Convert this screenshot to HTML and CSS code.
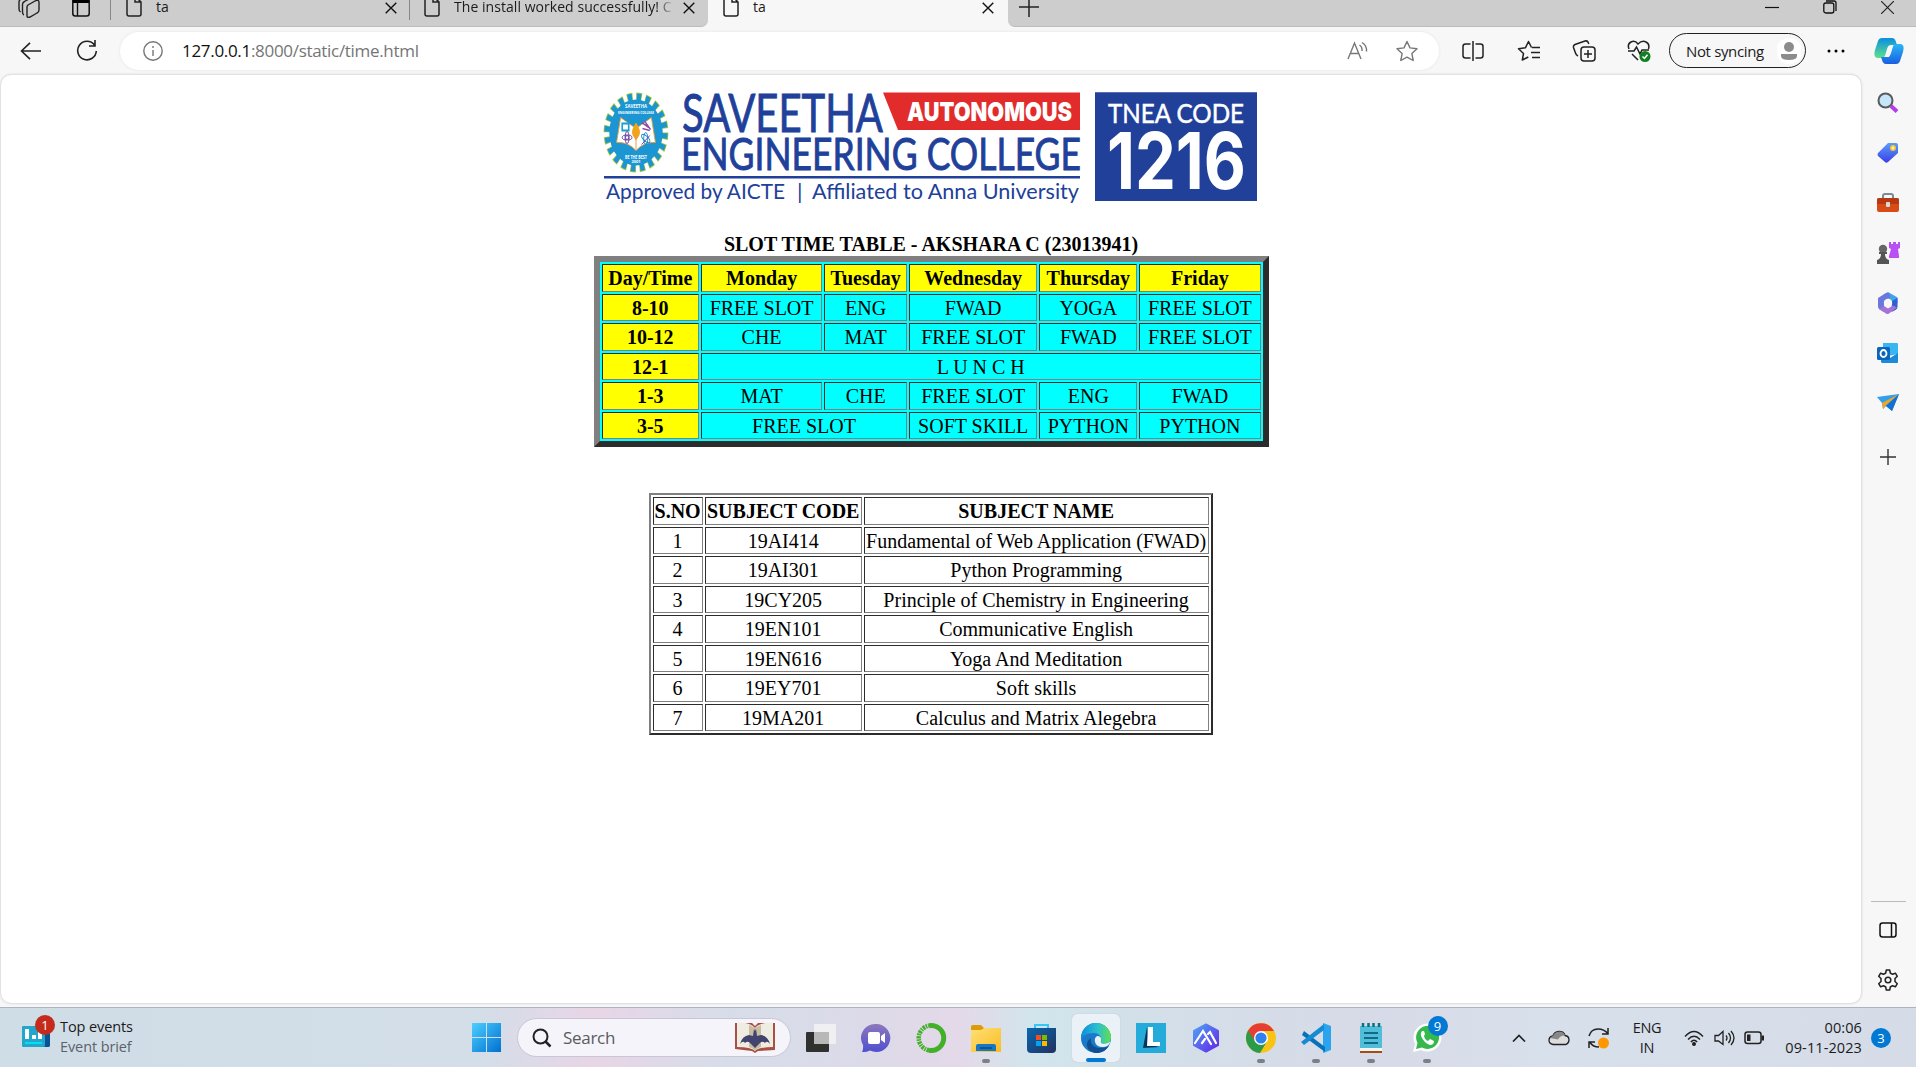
FILE: index.html
```html
<!DOCTYPE html>
<html lang="en">
<head>
<meta charset="utf-8">
<title>ta</title>
<link rel="stylesheet" href="styles.css">
</head>
<body>
<svg width="0" height="0" class="defs">
  <defs>
    <symbol id="doc" viewBox="0 0 20 22"><path d="M3 1h8l6 6v12a2 2 0 0 1-2 2H5a2 2 0 0 1-2-2zM11 1v6h6" fill="none" stroke="#222" stroke-width="1.5"/></symbol>
    <symbol id="x" viewBox="0 0 12 12"><path d="M.7.7l10.6 10.6M11.3.7L.7 11.3" stroke="#111" stroke-width="1.4"/></symbol>
    <linearGradient id="gBlue" x2="1" y2="1"><stop offset="0" stop-color="#4cd0ff"/><stop offset="1" stop-color="#0070d0"/></linearGradient>
    <linearGradient id="gTeal" x2="0" y2="1"><stop offset="0" stop-color="#0a8fe0"/><stop offset="1" stop-color="#5fe08c"/></linearGradient>
    <linearGradient id="gCo" x2="0" y2="1"><stop offset="0" stop-color="#29b6f6"/><stop offset="1" stop-color="#1a5fe0"/></linearGradient>
    <linearGradient id="gPur" x2="1" y2="1"><stop offset="0" stop-color="#4fa3f5"/><stop offset="1" stop-color="#6425e8"/></linearGradient>
    <linearGradient id="gTag" x2="0" y2="1"><stop offset="0" stop-color="#5c9dfa"/><stop offset="1" stop-color="#3a3fe6"/></linearGradient>
    <linearGradient id="gChat" x2="0" y2="1"><stop offset="0" stop-color="#8d78bd"/><stop offset="1" stop-color="#4f50cf"/></linearGradient>
    <linearGradient id="gFold" x2="1" y2="1"><stop offset="0" stop-color="#ffdf77"/><stop offset="1" stop-color="#f9bd22"/></linearGradient>
    <linearGradient id="gEdge" x2="1"><stop offset="0" stop-color="#0d8ddb"/><stop offset=".55" stop-color="#2bc0d0"/><stop offset="1" stop-color="#62df4c"/></linearGradient>
    <linearGradient id="gStore" x2="1" y2="1"><stop offset="0" stop-color="#0868b2"/><stop offset="1" stop-color="#24305c"/></linearGradient>
  </defs>
</svg>

<header class="tabstrip">
  <span class="cell workspaces"><svg width="22" height="24" viewBox="0 0 22 24" fill="none" stroke="#222" stroke-width="1.4"><path d="M10 10l8-4.500q3-1 3 2V15q0 2-2 3l-7 4q-3 1-3-1v-9q0-1 1-2zM6 20q-1.500-.5-1.500-3V9.500q0-2 2-3l8-4.500M2.500 17q-1.500-1-1.500-3V7q0-2 2-3l6-3.500"/></svg></span>
  <span class="cell tabmenu"><svg width="18" height="20" viewBox="0 0 18 20"><rect x=".8" y="1" width="16.4" height="18" rx="2.5" fill="none" stroke="#111" stroke-width="1.5"/><path d="M1 1h16v5H1z"/><path d="M5.5 6v13" stroke="#111" stroke-width="1.4"/></svg></span>
  <div class="tab first"><svg class="doc"><use href="#doc"/></svg><span class="title">ta</span><svg class="x"><use href="#x"/></svg></div>
  <div class="tab second"><svg class="doc"><use href="#doc"/></svg><span class="title faded">The install worked successfully! C</span><svg class="x"><use href="#x"/></svg></div>
  <div class="tab active"><svg class="doc"><use href="#doc"/></svg><span class="title">ta</span><svg class="x"><use href="#x"/></svg></div>
  <div class="rest">
    <span class="cell newtab"><svg width="20" height="20"><path d="M0 10h20M10 0v20" stroke="#222" stroke-width="1.5"/></svg></span>
    <div class="winctl">
      <span class="cell"><svg width="14" height="14"><path d="M0 7.500h14" stroke="#111" stroke-width="1.2"/></svg></span>
      <span class="cell"><svg width="14" height="14" fill="none" stroke="#111" stroke-width="1.3"><rect x=".8" y="3" width="10" height="10" rx="2"/><path d="M3 1h8q2 0 2 2v8"/></svg></span>
      <span class="cell"><svg width="13" height="13" viewBox="0 0 12 12"><path d="M0 0l12 12M12 0L0 12" stroke="#222" stroke-width="1.1"/></svg></span>
    </div>
  </div>
</header>

<nav class="toolbar">
  <span class="cell back"><svg width="22" height="18"><path d="M21 9H1.5M10 .8L1.5 9l8.500 8.200" fill="none" stroke="#222" stroke-width="1.6"/></svg></span>
  <span class="cell reload"><svg width="22" height="22" fill="none" stroke="#222" stroke-width="1.6"><path d="M18.500 5A9.300 9.300 0 1 0 20.300 11M19 0v6h-6"/></svg></span>
  <div class="address">
    <svg class="info" width="20" height="20" fill="none" stroke="#777" stroke-width="1.4"><circle cx="10" cy="10" r="9.200"/><path d="M10 9v6M10 5v2"/></svg>
    <span class="url"><b>127.0.0.1</b>:8000/static/time.html</span>
    <svg class="read" width="22" height="20" fill="none" stroke="#777" stroke-width="1.4"><path d="M1 18L7.500 2 14 18M3.500 12.500h8M12.500 4q3 2 2.500 6M15 1.500q5 3 4.500 9"/></svg>
    <svg class="fav" width="24" height="22" viewBox="0 0 24 22" fill="none" stroke="#777" stroke-width="1.4" stroke-linejoin="round"><path d="M12 1.500l3 6.400 7 .9-5.100 4.800 1.300 6.900-6.200-3.400-6.200 3.400 1.300-6.900L2 8.800l7-.9z"/></svg>
  </div>
  <div class="tools">
    <span class="cell"><svg width="22" height="20" fill="none" stroke="#222" stroke-width="1.5"><path d="M8.500 3H3.500Q1 3 1 5.500v9Q1 17 3.500 17h5M13.500 3h5Q21 3 21 5.500v9q0 2.500-2.500 2.500h-5M11 0v20"/></svg></span>
    <span class="cell"><svg width="24" height="22" viewBox="0 0 24 22" fill="none" stroke="#222" stroke-width="1.500" stroke-linejoin="round"><path d="M14.500 7.500L11.500 1.500l-3 6.200-7 1L6.500 13.500 5.300 20l6-3M15 7.500h8M14 12.500h9M15 17.500h8"/></svg></span>
    <span class="cell collect"><svg width="24" height="22" fill="none" stroke="#222" stroke-width="1.500"><rect x="9" y="7" width="14" height="14" rx="3"/><path d="M16 10v8M12 14h8M6 16q-2-1-2.500-3L1.500 7.500q-.5-2 1.500-3L13 1q2-.5 3 1l.8 2"/></svg></span>
    <span class="cell last"><svg width="24" height="22" fill="none" stroke="#222" stroke-width="1.500"><path d="M2 9Q0 4 4 2q4-2 7 2 4-4 8-2 4 2 2.500 7M1 11h6l2.500-4 3.500 7 2-4h7M5 14l6 6"/><circle cx="18" cy="16.500" r="5.500" fill="#128020" stroke="none"/><path d="M15.500 16.500l2 2 3-3.700" stroke="#fff"/></svg></span>
  </div>
  <div class="profile"><span>Not syncing</span><svg width="24" height="28"><circle cx="12" cy="14" r="13" fill="#fff"/><circle cx="12" cy="10" r="5" fill="#8c8c8c"/><path d="M4 17h16v2q0 4-8 4t-8-4z" fill="#8c8c8c"/></svg></div>
  <span class="cell more"><svg width="18" height="4"><circle cx="2" cy="2" r="1.500"/><circle cx="9" cy="2" r="1.500"/><circle cx="16" cy="2" r="1.500"/></svg></span>
  <span class="cell copilot"><svg width="30" height="28" viewBox="0 0 30 28"><path d="M8 1h10q3 0 4 4l1 3h-6q-3 0-4 4l-2 7q-1 2-4 2H4q-5 0-3-8L4 4q1-3 4-3z" fill="url(#gTeal)"/><path d="M22 27H12q-3 0-4-4l-1-3h6q3 0 4-4l2-7q1-2 4-2h3q5 0 3 8l-3 9q-1 3-4 3z" fill="url(#gCo)"/><path d="M15 9h4l-4 11h-4z" fill="#f7f7f7"/></svg></span>
</nav>

<div class="middle">
  <main class="page">
    <svg class="banner" width="656" height="116" viewBox="604 90 656 116" role="img">
      <g transform="translate(637 132.500) scale(.81 1)">
        <circle r="35.500" fill="none" stroke="#a8c83c" stroke-width="9" stroke-dasharray="6.800 4.353"/>
        <circle r="35" fill="none" stroke="#1b96d3" stroke-width="8" stroke-dasharray="5.200 5.796" stroke-dashoffset="-.7"/>
        <circle r="33" fill="#1b96d3"/>
        <path d="M-19-15L0-4 19-15 24 10Q10 9 0 18-10 9-24 10z" fill="#fff" stroke="#e59a35"/>
        <path d="M-17-9h8v7h-8z" fill="none" stroke="#16a0cf" stroke-width="2"/><path d="M7-10l9 5-5-6 7 8M8-4l9 2" stroke="#8b4da8" stroke-width="1.500"/>
        <g fill="none" stroke="#60359b"><ellipse cx="-11" cy="5" rx="6" ry="2.500"/><ellipse cx="-11" cy="5" rx="2.500" ry="6"/><circle cx="-11" cy="5" r="2"/></g>
        <g fill="none" stroke="#1488cb"><ellipse cx="12" cy="6" rx="6" ry="2.500" transform="rotate(35 12 6)"/><ellipse cx="12" cy="6" rx="2.500" ry="6"/><path d="M7 12l10-9" stroke="#60359b"/></g>
        <path d="M0-10Q7-2 4 3L0 8-4 3Q-7-2 0-10z" fill="#f2a21b"/><path d="M0 3v14" stroke="#e59a35"/>
      </g>
      <g fill="#fff" font-family="Open Sans, sans-serif" font-weight="700" text-anchor="middle">
        <text x="637" y="108" font-size="5" textLength="22" lengthAdjust="spacingAndGlyphs">SAVEETHA</text>
        <text x="637" y="114" font-size="4" textLength="36" lengthAdjust="spacingAndGlyphs">ENGINEERING COLLEGE</text>
        <text x="637" y="158.500" font-size="4.500" textLength="22" lengthAdjust="spacingAndGlyphs">BE THE BEST</text>
        <text x="637" y="163" font-size="4">2001</text>
      </g>
      <g fill="#20409a" stroke="#20409a" font-family="Lato, sans-serif">
        <text x="683" y="131.500" font-size="53" stroke-width=".9" textLength="201" lengthAdjust="spacingAndGlyphs">SAVEETHA</text>
        <text x="682" y="169.500" font-size="44" stroke-width=".9" textLength="400" lengthAdjust="spacingAndGlyphs">ENGINEERING COLLEGE</text>
      </g>
      <path d="M884 92.500h197v37.500H899z" fill="#e22b2b"/>
      <text x="908" y="121" font-family="Inter, sans-serif" font-weight="900" font-size="26" fill="#fff" textLength="165" lengthAdjust="spacingAndGlyphs">AUTONOMOUS</text>
      <path d="M605 177.300h476" stroke="#20409a" stroke-width="2.600"/>
      <g fill="#20409a" font-family="Lato, sans-serif" font-size="22">
        <text x="607" y="199" textLength="179" lengthAdjust="spacingAndGlyphs">Approved by AICTE</text>
        <text x="798" y="199">|</text>
        <text x="813" y="199" textLength="267" lengthAdjust="spacingAndGlyphs">Affiliated to Anna University</text>
      </g>
      <path d="M1096 92.300h162V201h-162z" fill="#20409a"/>
      <text x="1109" y="122.500" font-family="Lato, sans-serif" font-size="26.500" fill="#fff" stroke="#fff" stroke-width=".5" textLength="136" lengthAdjust="spacingAndGlyphs">TNEA CODE</text>
      <text x="1108" y="189" font-family="Inter, sans-serif" font-weight="700" font-size="78" fill="#fff" textLength="139" lengthAdjust="spacingAndGlyphs">1216</text>
    </svg>

    <table class="slots">
      <caption>SLOT TIME TABLE - AKSHARA C (23013941)</caption>
      <colgroup><col class="w1"><col class="w2"><col class="w3"><col class="w4"><col class="w5"><col class="w6"></colgroup>
      <tr><th>Day/Time</th><th>Monday</th><th>Tuesday</th><th>Wednesday</th><th>Thursday</th><th>Friday</th></tr>
      <tr><th>8-10</th><td>FREE SLOT</td><td>ENG</td><td>FWAD</td><td>YOGA</td><td>FREE SLOT</td></tr>
      <tr><th>10-12</th><td>CHE</td><td>MAT</td><td>FREE SLOT</td><td>FWAD</td><td>FREE SLOT</td></tr>
      <tr><th>12-1</th><td colspan="5">L U N C H</td></tr>
      <tr><th>1-3</th><td>MAT</td><td>CHE</td><td>FREE SLOT</td><td>ENG</td><td>FWAD</td></tr>
      <tr><th>3-5</th><td colspan="2">FREE SLOT</td><td>SOFT SKILL</td><td>PYTHON</td><td>PYTHON</td></tr>
    </table>

    <table class="subjects">
      <colgroup><col class="s1"><col class="s2"><col class="s3"></colgroup>
      <tr><th>S.NO</th><th>SUBJECT CODE</th><th>SUBJECT NAME</th></tr>
      <tr><td>1</td><td>19AI414</td><td>Fundamental of Web Application (FWAD)</td></tr>
      <tr><td>2</td><td>19AI301</td><td>Python Programming</td></tr>
      <tr><td>3</td><td>19CY205</td><td>Principle of Chemistry in Engineering</td></tr>
      <tr><td>4</td><td>19EN101</td><td>Communicative English</td></tr>
      <tr><td>5</td><td>19EN616</td><td>Yoga And Meditation</td></tr>
      <tr><td>6</td><td>19EY701</td><td>Soft skills</td></tr>
      <tr><td>7</td><td>19MA201</td><td>Calculus and Matrix Alegebra</td></tr>
    </table>
  </main>

  <aside class="sidebar">
    <div class="apps">
      <span class="cell"><svg width="22" height="22"><path d="M14 14l6 5.500" stroke="#b43cf0" stroke-width="4"/><circle cx="8.500" cy="8.500" r="7" fill="#c5e6fa" stroke="#5a5a5a" stroke-width="2"/></svg></span>
      <span class="cell"><svg width="22" height="22"><path d="M11 1h8q2 0 2 2v8L11 20q-2 1.500-3 0l-7-6q-1-1.500 0-3z" fill="url(#gTag)"/><circle cx="16" cy="6" r="2.200" fill="#fff3a0" stroke="#f7c82d" stroke-width="1.500"/></svg></span>
      <span class="cell"><svg width="24" height="20"><path d="M7 5V3q0-2 2-2h6q2 0 2 2v2" fill="none" stroke="#7d8990" stroke-width="2"/><rect x="1" y="5" width="22" height="14" rx="2" fill="#d84a16"/><path d="M1 7q0-2 2-2h18q2 0 2 2v4H1z" fill="#b63812"/><rect x="10" y="9" width="4" height="5" rx="1" fill="#d5dcdf"/></svg></span>
      <span class="cell"><svg width="24" height="24"><path d="M13 1h2v2h2V1h3v2h2V1h2v6l-2 1 1 7v2H13v-2l2-7-2-1z" fill="#b950f4"/><circle cx="7" cy="8" r="4.200" fill="#666"/><path d="M3 11h8v2H9q0 5 4 6v4H1v-4q4-1 4-6H3z" fill="#555"/></svg></span>
      <span class="cell"><svg width="22" height="24"><path d="M11 1l9.500 5.500v6L15 10l-4-3-4 2-1-5z" fill="#3fa4ea"/><path d="M1 7l8-5q3-1 4 2v3L7 10v11l-5-3q-1-1-1-3z" fill="#6a78de"/><path d="M20.500 7v9q0 2-2 3l-4 2 .5-11z" fill="#2f62cf"/><path d="M2 18l5-3 4 2.500 5-3 4 2-8 6q-1.500 1-3 0z" fill="#a472d8"/><circle cx="11" cy="12" r="4.200" fill="#f7f7f7"/></svg></span>
      <span class="cell"><svg width="22" height="22"><path d="M6 1h14q1 0 1 1v10l-15 3z" fill="#38b6f2"/><path d="M4 20V12l9 4 8-5v9q0 1-1 1H5z" fill="#198bd8"/><rect x="0" y="5" width="13" height="13" rx="1.500" fill="#0a65bd"/><ellipse cx="6.500" cy="11.500" rx="3" ry="3.500" fill="none" stroke="#fff" stroke-width="1.800"/></svg></span>
      <span class="cell"><svg width="22" height="18"><path d="M0 3L22 0 15 17 9 12 6 15 5 9z" fill="#359ded"/><path d="M22 0L5 9l1 6 3-4z" fill="#f3a51c"/><path d="M22 0L9 12l6 5z" fill="#1470ce"/></svg></span>
      <span class="cell plus"><svg width="16" height="16"><path d="M0 8h16M8 0v16" stroke="#333" stroke-width="1.400"/></svg></span>
    </div>
    <div class="bottom">
      <span class="cell"><svg width="18" height="16" fill="none" stroke="#111" stroke-width="1.500"><rect x="1" y="1" width="16" height="14" rx="2.500"/><path d="M12.500 1v14"/></svg></span>
      <span class="cell"><svg width="22" height="22" viewBox="0 0 22 22" fill="none" stroke="#222" stroke-width="1.500" stroke-linejoin="round"><path d="M9.300 1h3.400l.6 3 2.200 1.300 2.900-1.100 1.900 3.100L18 9.500v3l2.300 2.200-1.900 3.100-2.900-1.100-2.200 1.300-.6 3H9.300l-.6-3-2.200-1.300-2.900 1.100-1.900-3.100L4 12.500v-3L1.700 7.300l1.900-3.100 2.900 1.100L8.700 4z"/><circle cx="11" cy="11" r="2.800"/></svg></span>
    </div>
  </aside>
</div>

<footer class="taskbar">
  <div class="widgets">
    <div class="wicon"><svg width="28" height="22"><rect width="28" height="21" rx="2" fill="#087bc7"/><rect width="23" height="21" rx="2" fill="#22a6c9"/><path d="M23 4h5v15q0 2-3 2h-2z" fill="#0a5298"/><path d="M3 3h4v10H3zM10 9h4v4h-4zM16 6h4v7h-4z" fill="#fff"/><path d="M3 17h17" stroke="#08dcf7" stroke-width="2"/></svg><span class="badge red">1</span></div>
    <div class="wtext"><span>Top events</span><span class="sub">Event brief</span></div>
  </div>
  <div class="center">
    <span class="cell start"><svg width="29" height="29"><path d="M0 0h14v14H0zM15 0h14v14H15zM0 15h14v14H0zM15 15h14v14H15z" fill="url(#gBlue)"/></svg></span>
    <div class="search"><svg width="20" height="20" fill="none" stroke="#222" stroke-width="2"><circle cx="8.500" cy="8.500" r="7"/><path d="M13.500 13.500l5 5" stroke-width="2.500"/></svg><span>Search</span>
      <svg class="book" width="40" height="32"><path d="M0 1h17l3 3 3-3h17v27l-17 1-3 2-3-2-17-2z" fill="#a94f43"/><path d="M2 1q13-1 18 5Q25 0 38 1v24q-14 0-18 4Q16 25 2 25z" fill="#efede2"/><path d="M20 6v23q-2-3-6-4V3zM20 6v23q2-3 6-4V3z" fill="#c8bca3"/><path d="M5 22q2-8 9-9l4 1 1-7 1 2 1-2 1 7 4-1q7 1 9 9-3-4-5-1-3-3-6 1l-4 4-4-4q-3-4-6-1-2-3-5 1z" fill="#43436f"/></svg></div>
    <span class="app"><svg width="30" height="28"><rect y="8" width="23" height="20" rx="1" fill="#30302f"/><rect x="8" width="22" height="20" rx="1" fill="#f5f5f5" fill-opacity=".8"/><path d="M8 8h15v12H8z" fill="#b8b8b8"/></svg></span>
    <span class="app"><svg width="30" height="30"><path d="M15 1a14 14 0 1 1-6 26.500Q5 29.500 1 29q1.500-3 1-7A14 14 0 0 1 15 1z" fill="url(#gChat)"/><rect x="7" y="9" width="12" height="12" rx="2" fill="#fff"/><path d="M20 13l4-3v10l-4-3z" fill="#fff"/></svg></span>
    <span class="app"><svg width="32" height="32" fill="none" stroke="#43b02a"><path d="M14 28.300a12.500 12.500 0 1 0 0-24.600" stroke-width="5"/><path d="M14 28.300a12.500 12.500 0 0 1 0-24.600" stroke-width="4.500" stroke-dasharray="2.500 .8 1.500 .8"/></svg></span>
    <span class="app run"><svg width="30" height="28"><path d="M0 3q0-2 2-2h8l3 3h17v8H0z" fill="#dc9b08"/><path d="M0 6h10l3-2h17v24H0z" fill="url(#gFold)"/><path d="M5 27v-5q0-2 2-2h16q2 0 2 2v5z" fill="#1678c5"/><path d="M9 24h12" stroke="#084b8b" stroke-width="1.500"/></svg></span>
    <span class="app"><svg width="30" height="30"><path d="M9 6V2h13v4" fill="none" stroke="#38c6f4" stroke-width="2"/><path d="M1 5h29v21q0 4-4 4H5q-4 0-4-4z" fill="url(#gStore)"/><path d="M10 12h5v5h-5z" fill="#f25022"/><path d="M16 12h5v5h-5z" fill="#7fba00"/><path d="M10 18h5v5h-5z" fill="#00a4ef"/><path d="M16 18h5v5h-5z" fill="#ffb900"/></svg></span>
    <span class="app current"><svg width="30" height="30"><circle cx="15" cy="15" r="15" fill="#1a79c9"/><path d="M0 16C0 6 7 0 15 0c9 0 15 7 15 14 0 6-6 9-11 7 3-4 1-11-6-11C6 10 1 13 0 16z" fill="url(#gEdge)"/><path d="M10 15c-2 8 7 13 18 8-5 8-14 9-20 4-3-4-3-9 2-12z" fill="#104f91"/><path d="M29.500 18Q28 24 22 24q-7 0-8-5-1-4 2-6 5 0 4 5-1 2 2 3 5 0 7.500-3z" fill="#eaf1f7"/></svg></span>
    <span class="app"><svg width="30" height="30"><path d="M0 0h30v30H0z" fill="#24abd9"/><path d="M11 4L7 25l16-1-10-3z" fill="#07345d"/><path d="M12 4h5v15h7v4H11z" fill="#fff"/></svg></span>
    <span class="app"><svg width="30" height="30"><path d="M15 1.500l12 6.500v14l-12 6.500L3 22V8z" fill="url(#gPur)" stroke="url(#gPur)" stroke-width="2" stroke-linejoin="round"/><path d="M4 20l8-12 8 13M11 20l3-4M17 11l2-2 6 11" fill="none" stroke="#fff" stroke-width="2.200" stroke-linecap="round"/></svg></span>
    <span class="app run"><svg width="30" height="30"><circle cx="15" cy="15" r="15" fill="#f9c313"/><path d="M15 15L2 7.500A15 15 0 0 0 14 30l7-11.500z" fill="#2c9b48"/><path d="M2 7.500A15 15 0 0 1 28 8H15l-6 10z" fill="#e63f32"/><circle cx="15" cy="15" r="7" fill="#fff"/><circle cx="15" cy="15" r="5.600" fill="#3180ed"/></svg></span>
    <span class="app run"><svg width="30" height="30"><path d="M22 0l8 3v24l-8 3z" fill="#2aa4ee"/><path d="M3 8L24 24v5L1 12z" fill="#0871b8"/><path d="M23 1v6L3 22l-3-3z" fill="#168bd4"/></svg></span>
    <span class="app run"><svg width="24" height="30"><path d="M1 3h22v22H1z" fill="#50bdd9"/><path d="M1 25h22v3H1z" fill="#f5f5f5"/><path d="M1 29h22" stroke="#a44d12" stroke-width="2"/><path d="M5 10h14M5 15h14M5 20h14" stroke="#116b88" stroke-width="2"/><path d="M4 0v4M9.500 0v4M14.500 0v4M20 0v4" stroke="#087184" stroke-width="2.500"/></svg></span>
    <span class="app run"><svg width="30" height="30"><path d="M1 29l2-8A14 14 0 1 1 9 27z" fill="#fff"/><path d="M4 26l1.500-6A11.500 11.500 0 1 1 10 24.500z" fill="#35b94c"/><path d="M10 8q-2 2-1 5 3 7 9 9 4 0 4-4l-4-2-2 2q-3-1-4-5l1-2-1-3z" fill="#fff"/></svg><span class="badge blue">9</span></span>
  </div>
  <div class="tray">
    <span class="cell chev"><svg width="14" height="8"><path d="M1 7.500L7 1.500l6 6" fill="none" stroke="#222" stroke-width="1.700"/></svg></span>
    <span class="cell cloud"><svg width="22" height="16"><path d="M5 14.500q-4-1-4-4 0-4 4-4.500 1-4 6-4.500 5 0 6 4 4 .5 4 4.500 0 3-3 4.500z" fill="#ddd" stroke="#222" stroke-width="1.300"/><path d="M2 8q2-2 3-2 1-4 6-4.500 5 0 6 4-5 0-7 4z" fill="#888"/></svg></span>
    <span class="cell sync"><svg width="22" height="22" fill="none" stroke="#222" stroke-width="1.500"><path d="M1 9Q3 2 10 2q6 0 10 4.500M20 1v6h-6M11 20q-6 0-9-4.500M1 21v-6h6"/><circle cx="15.500" cy="16" r="5.500" fill="#ff9800" stroke="none"/></svg></span>
    <div class="lang"><span>ENG</span><span>IN</span></div>
    <svg width="20" height="16" fill="none" stroke="#222" stroke-width="1.400"><path d="M1 6.500q9-10 18 0M4 9.500q6-6.500 12 0M6.800 12q3.200-3.500 6.400 0"/><circle cx="10" cy="14" r="1.300" fill="#222"/></svg>
    <svg class="vol" width="21" height="16" fill="none" stroke="#222" stroke-width="1.300"><path d="M1 5.500h3.500L9 1.500v13L4.500 11H1zM12 5.500q2 2.500 0 5M14.500 3q4 5 0 10M17 1q6 7 0 14"/></svg>
    <svg class="bat" width="20" height="14"><rect x="1" y="1" width="16" height="11.500" rx="2.500" fill="none" stroke="#222" stroke-width="1.500"/><path d="M3 3.500h3.500V10H3zM17.500 4.500H20v5h-2.500z" fill="#222"/></svg>
    <div class="clock"><span>00:06</span><span>09-11-2023</span></div>
    <span class="badge blue count">3</span>
  </div>
</footer>
</body>
</html>
```
FILE: styles.css
```css
* { box-sizing: border-box; }
body {
  margin: 0; width: 1916px; height: 1067px; overflow: hidden;
  display: flex; flex-direction: column;
  background: #f7f7f7; color: #1b1b1b;
  font-family: "Open Sans", sans-serif; font-size: 14px;
}
svg { display: block; flex: none; }
.defs { position: absolute; }
.cell { display: flex; align-items: center; justify-content: center; flex: none; }

/* Tab strip */
.tabstrip { display: flex; height: 27px; flex: none; background: #f7f7f7; }
.tabstrip > *, .rest { background: #cdcdcd; border-bottom: 1px solid #bcbcbc; }
.workspaces, .tabmenu { padding-bottom: 12px; }
.workspaces { width: 58px; }
.tabmenu { width: 52px; padding-right: 6px; }
.tab { display: flex; align-items: flex-start; flex: none; }
.doc { width: 20px; height: 22px; margin: -5px 12px 0 0; }
.title { width: 218px; height: 22px; margin-top: -4px; line-height: 22px; white-space: nowrap; overflow: hidden; }
.faded { letter-spacing: .05px; -webkit-mask-image: linear-gradient(90deg, #000 93%, transparent 101%); mask-image: linear-gradient(90deg, #000 93%, transparent 101%); }
.x { width: 12px; height: 12px; margin: 2px 0 0 11px; }
.first { width: 299px; padding-left: 14px; }
.second { width: 299px; padding-left: 13px; }
.first, .second { background: linear-gradient(#888, #888) 0 0 / 1px 20px no-repeat #cdcdcd; }
.tabstrip .second { border-bottom-right-radius: 7px; }
.tabstrip .active { width: 300px; padding-left: 13px; background: #f7f7f7; border: 0; }
.rest { flex: 1; display: flex; justify-content: space-between; border-bottom-left-radius: 7px; }
.newtab { width: 42px; padding-bottom: 12px; }
.winctl { display: flex; }
.winctl .cell { width: 57.500px; padding-bottom: 12px; }

/* Toolbar */
.toolbar { display: flex; align-items: center; height: 48px; padding-bottom: 1px; flex: none; }
.back { width: 61px; }
.reload { width: 51px; }
.address { display: flex; align-items: center; width: 1319px; height: 38px; margin-left: 8px; padding: 0 20px 0 23px; border-radius: 19px; background: #fff; box-shadow: 0 0 3px #e2e2e2; }
.url { margin-left: 19px; flex: 1; font-size: 17px; letter-spacing: -.31px; color: #757575; }
.url b { font-weight: 400; color: #111; }
.read { margin-right: 26px; }
.tools { display: flex; margin-left: 6px; }
.tools .cell { width: 56px; }
.tools .collect { padding-right: 2px; }
.tools .last { width: 52px; }
.profile { display: flex; align-items: center; justify-content: space-between; width: 137px; height: 35px; margin-left: 4px; padding: 0 4px 0 16px; border: 1.500px solid #222; border-radius: 18px; font-size: 15px; letter-spacing: -.35px; }
.more { width: 56px; margin-left: 2px; }
.copilot { width: 50px; }

/* Page and sidebar */
.middle { display: flex; height: 933px; flex: none; border-bottom: 1px solid #adb3bf; }
.page { display: flex; flex-direction: column; align-items: center; width: 1860px; height: 928px; margin-left: 1px; padding-top: 15px; border-radius: 10px; background: #fff; box-shadow: 0 0 3px #bbb; color: #000; font: 20px/22.500px "Liberation Serif", serif; }
.banner { flex: none; overflow: visible; }
table { table-layout: fixed; border-spacing: 2.500px 2px; text-align: center; }
th, td { height: 28px; padding: 1px 0 0; border: 1px inset #808080; line-height: 23px; white-space: nowrap; }
tr:nth-child(even) > * { height: 27px; }
.slots { width: 675px; margin-top: 27px; border: 6px outset #808080; background: #0ff; }
.slots th { background: #ff0; }
caption { height: 23px; font-weight: 700; }
.w1 { width: 97px; } .w2, .w6 { width: 120.500px; } .w3 { width: 82.500px; } .w4 { width: 127.500px; } .w5 { width: 97.500px; }
.subjects { width: 564px; margin: 46px 1px 0 0; border: 2px outset #808080; }
.s1 { width: 50px; } .s2 { width: 156.500px; } .s3 { width: 343.500px; }
.sidebar { display: flex; flex-direction: column; justify-content: space-between; align-items: center; width: 54px; padding: 3px 0 1px; }
.apps .cell { width: 54px; height: 50px; }
.apps .plus { height: 58px; }
.bottom { border-top: 1px solid #bbb; width: 35px; height: 105px; padding-top: 3px; }
.bottom .cell { height: 50px; }

/* Taskbar */
.taskbar { display: flex; height: 59px; flex: none; background: linear-gradient(90deg, #cfdde7 0, #d3dee8 25%, #e8d5e6 31%, #d6dde9 38%, #dcdae8 45%, #e4d9e8 50%, #d1e5ec 54%, #d3dfe9 60%, #d7dae7 72%, #d8e0eb 80%, #d5dce8 100%); }
.widgets { display: flex; width: 459px; padding: 9px 0 0 22px; }
.wicon { position: relative; width: 28px; height: 22px; margin-top: 9px; }
.badge { display: flex; align-items: center; justify-content: center; width: 20px; height: 20px; border-radius: 50%; color: #fff; font-size: 13px; }
.red { position: absolute; left: 13px; top: -11px; background: #c42b1c; }
.blue { background: #0078d4; }
.wtext { display: flex; flex-direction: column; margin-left: 10px; line-height: 20px; font-size: 14.500px; letter-spacing: -.1px; }
.sub { color: #5b626b; }
.center { display: flex; align-items: center; width: 1035px; }
.start { width: 54px; margin-right: 4px; }
.search { display: flex; align-items: center; width: 274px; height: 39px; padding: 0 15px 0 14px; margin-right: 2px; border: 1px solid #c9c7d5; border-radius: 20px; background: #f5f4fa; font-size: 17px; letter-spacing: -.3px; color: #5b5b60; }
.search span { flex: 1; margin-left: 11px; }
.app { position: relative; display: flex; align-items: center; justify-content: center; width: 48px; height: 48px; margin: 0 3.550px; flex: none; }
.run::after, .current::after { content: ""; position: absolute; bottom: -1px; left: 20px; width: 8px; height: 4px; border-radius: 2px; background: #7b8088; }
.current { border-radius: 5px; background: #eaf1f7; box-shadow: 0 0 1px #aab; }
.current::after { left: 14px; width: 20px; bottom: 0; background: #0078d4; }
.app .badge { position: absolute; left: 25px; top: 2px; }
.tray { display: flex; align-items: center; }
.chev { width: 50px; margin-right: -5px; }
.cloud, .sync { width: 40px; }
.lang, .clock { display: flex; flex-direction: column; line-height: 20px; font-size: 14.500px; letter-spacing: -.3px; }
.lang { width: 56px; align-items: center; margin-right: 9px; }
.vol { margin-left: 10px; }
.bat { margin-left: 9px; }
.clock { width: 98px; align-items: flex-end; letter-spacing: .1px; }
.count { margin-left: 9px; }
```
